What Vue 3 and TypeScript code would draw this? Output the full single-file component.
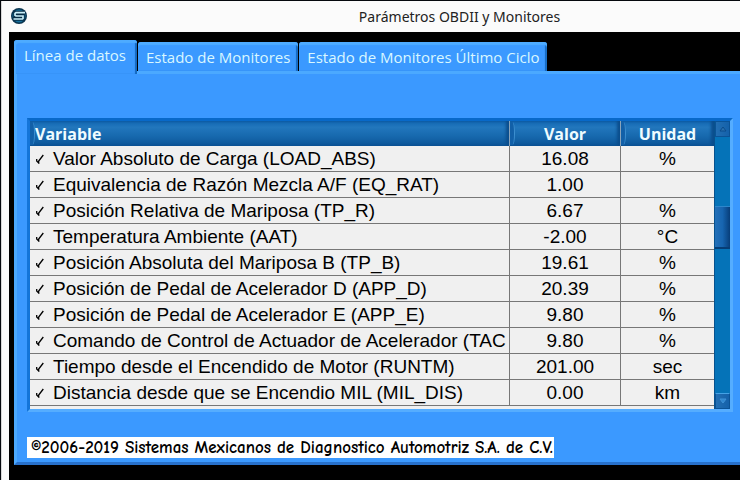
<script setup lang="ts">
import { ref } from 'vue'

interface Reading {
  name: string
  value: string
  unit: string
}

const tabs: string[] = ['Línea de datos', 'Estado de Monitores', 'Estado de Monitores Último Ciclo']
const active = ref(0)

const readings: Reading[] = [
  { name: 'Valor Absoluto de Carga (LOAD_ABS)', value: '16.08', unit: '%' },
  { name: 'Equivalencia de Razón Mezcla A/F (EQ_RAT)', value: '1.00', unit: '' },
  { name: 'Posición Relativa de Mariposa (TP_R)', value: '6.67', unit: '%' },
  { name: 'Temperatura Ambiente (AAT)', value: '-2.00', unit: '°C' },
  { name: 'Posición Absoluta del Mariposa B (TP_B)', value: '19.61', unit: '%' },
  { name: 'Posición de Pedal de Acelerador D (APP_D)', value: '20.39', unit: '%' },
  { name: 'Posición de Pedal de Acelerador E (APP_E)', value: '9.80', unit: '%' },
  { name: 'Comando de Control de Actuador de Acelerador (TAC', value: '9.80', unit: '%' },
  { name: 'Tiempo desde el Encendido de Motor (RUNTM)', value: '201.00', unit: 'sec' },
  { name: 'Distancia desde que se Encendio MIL (MIL_DIS)', value: '0.00', unit: 'km' },
]
</script>

<template>
  <div class="window">
    <header class="titlebar">
      <svg class="logo" viewBox="0 0 16 16" aria-hidden="true">
        <circle cx="8" cy="8" r="8" fill="#0b3550" />
        <circle cx="8" cy="8" r="6.500" fill="#15709c" />
        <path d="M14 4.500H4V8H12V11H2" fill="none" stroke="#062c45" stroke-width="3.400" />
        <path d="M14 4.700H5L4 5.500V7.300L5 8H12V10.500L11.500 11H2.500" fill="none" stroke="#c9effa" stroke-width="1.700" />
      </svg>
      <h1>Parámetros OBDII y Monitores</h1>
    </header>

    <main class="client">
      <nav class="tabs" role="tablist">
        <button
          v-for="(tab, i) in tabs"
          :key="tab"
          type="button"
          role="tab"
          :aria-selected="active === i"
          :class="['tab', { active: active === i }]"
          @click="active = i"
        >{{ tab }}</button>
      </nav>

      <section class="panel">
        <div class="frame">
          <div class="grid">
            <table>
              <colgroup>
                <col />
                <col class="col-value" />
                <col class="col-unit" />
              </colgroup>
              <thead>
                <tr>
                  <th class="name">Variable</th>
                  <th>Valor</th>
                  <th>Unidad</th>
                </tr>
              </thead>
              <tbody>
                <tr v-for="r in readings" :key="r.name">
                  <td class="name">
                    <svg class="check" viewBox="0 0 8 10" aria-hidden="true">
                      <path d="M0.700 5V7L2.700 9V7L7.300 1" fill="none" stroke="#000" stroke-width="1.300" />
                    </svg>{{ r.name }}
                  </td>
                  <td>{{ r.value }}</td>
                  <td>{{ r.unit }}</td>
                </tr>
              </tbody>
            </table>
          </div>
          <div class="scroll">
            <button type="button" class="arrow" aria-label="Subir">
              <svg viewBox="0 0 8 6" aria-hidden="true"><path d="M4 1L7 5H1Z" fill="#2a70ae" stroke="#0b4c8c" /></svg>
            </button>
            <div class="track"><div class="thumb"></div></div>
            <button type="button" class="arrow down" aria-label="Bajar">
              <svg viewBox="0 0 8 6" aria-hidden="true"><path d="M1 1H7L4 5Z" fill="#2f86d0" stroke="#3f92d6" /></svg>
            </button>
          </div>
        </div>
        <p class="copyright">©2006-2019 Sistemas Mexicanos de Diagnostico Automotriz S.A. de C.V.</p>
      </section>
    </main>
  </div>
</template>

<style>
body {
  background: #05080d;
}
</style>

<style scoped>
* {
  box-sizing: border-box;
}
.window {
  min-height: calc(100vh - 1px);
  margin: 1px 0 0 1px;
  padding-left: 7px;
  background: #fbfbfb;
  border-left: 1px solid #d8d8d8;
  display: flex;
  flex-direction: column;
  overflow: hidden;
}
.titlebar {
  height: 31px;
  position: relative;
  display: flex;
  align-items: center;
  justify-content: center;
  padding-left: 170px;
}
.logo {
  position: absolute;
  left: 2px;
  top: 7px;
  width: 16px;
  height: 16px;
}
h1 {
  margin: 0;
  font: 400 14px/20px "Noto Sans", "Open Sans", sans-serif;
  color: #222;
}
.client {
  flex: 1;
  background: #000;
  padding: 8px 0 15px 5px;
}
.tabs {
  display: flex;
  align-items: flex-end;
  gap: 1px;
}
.tab {
  height: 29px;
  border: 0;
  padding: 0 8px;
  border-radius: 3px 3px 0 0;
  background: #3b99ff;
  box-shadow: inset 0 3px 1px #4eabff, inset -2px 0 1px #1468bf;
  font: 400 15px/28px "Open Sans", "Noto Sans", sans-serif;
  color: #d9f7ff;
  white-space: nowrap;
}
.tab.active {
  height: 34px;
  margin-bottom: -3px;
  padding: 0 11px 4px 10px;
  position: relative;
  box-shadow: inset 2px 3px 1px #4eabff, inset -2px 0 1px #1468bf;
}
.panel {
  background: #3b99ff;
  border-left: 3px solid #4ba9ff;
  border-top: 3px solid #4ba9ff;
  border-bottom: 3px solid #2871cc;
  padding: 44px 7px 4px 10px;
}
.frame {
  display: flex;
  border: 3px solid;
  border-color: #0869c9 #55adff #55adff #1475d9;
  height: 294px;
}
.grid {
  flex: 1;
  min-width: 0;
  overflow: hidden;
  background: #f0f0f0;
}
table {
  width: 100%;
  table-layout: fixed;
  border-collapse: separate;
  border-spacing: 0;
}
.col-value {
  width: 111px;
}
.col-unit {
  width: 93px;
}
th {
  position: relative;
  height: 25px;
  padding: 0;
  background: linear-gradient(#1166b2, #2277bd 25%, #1769ae 60%, #0c5598);
  box-shadow: inset -3px 0 3px #0b4e8d;
  border-right: 1px solid #8aa4ba;
  font: 700 16px/24px "Open Sans", "Noto Sans", sans-serif;
  color: #effcff;
}
th::before {
  content: "";
  position: absolute;
  left: 0;
  top: 1px;
  bottom: 1px;
  width: 4px;
  border-right: 1px solid #3d8fd0;
  border-radius: 0 50% 50% 0;
  background: #1260a8;
}
th.name {
  text-align: left;
  padding-left: 5px;
}
td {
  height: 26px;
  padding: 0;
  border-right: 1px solid #777;
  border-bottom: 1px solid #777;
  font: 400 19px/25px "Liberation Sans", Arial, sans-serif;
  color: #000;
  text-align: center;
  white-space: nowrap;
  overflow: hidden;
}
td.name {
  text-align: left;
  padding-left: 6px;
}
th:last-child,
td:last-child {
  border-right: 0;
}
.check {
  width: 8px;
  height: 10px;
  margin-right: 9px;
  vertical-align: 1px;
}
.scroll {
  width: 16px;
  display: flex;
  flex-direction: column;
  background: #0573b8;
  border-left: 1px solid #07528e;
}
.arrow {
  height: 16px;
  padding: 0;
  border: 1px solid #0b5396;
  background: linear-gradient(90deg, #236fb3, #1461aa);
  display: flex;
  align-items: center;
  justify-content: center;
}
.arrow.down {
  border-top-color: #45a2e5;
}
.arrow svg {
  width: 8px;
  height: 6px;
}
.track {
  flex: 1;
  padding-top: 69px;
}
.thumb {
  height: 43px;
  background: linear-gradient(90deg, #2471b9, #1765b0 50%, #073e7a);
  border-top: 1px solid #2d86cb;
  border-bottom: 2px solid #063d75;
}
.copyright {
  width: fit-content;
  margin: 25px 0 0;
  padding: 0 1px 0 4px;
  background: #fff;
  font: 700 17px/21px "Comic Sans MS", "Comic Neue", Lato, sans-serif;
  color: #000;
  white-space: nowrap;
}
</style>
